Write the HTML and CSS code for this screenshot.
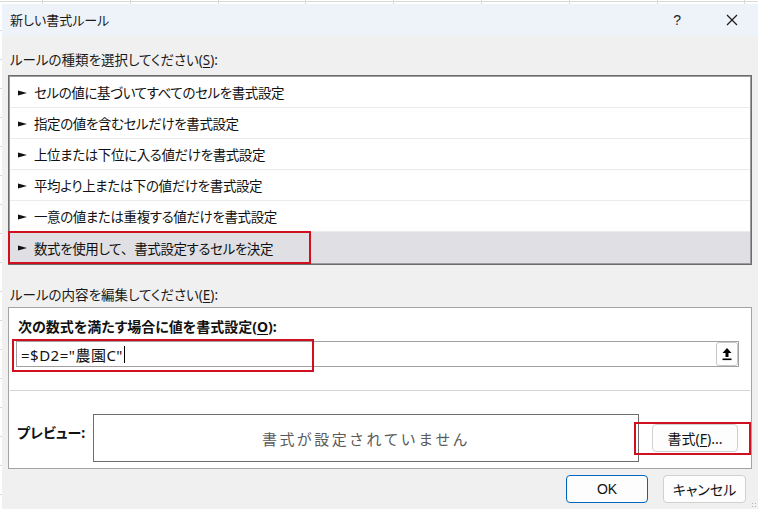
FILE: index.html
```html
<!DOCTYPE html>
<html lang="ja">
<head>
<meta charset="utf-8">
<title>新しい書式ルール</title>
<link rel="stylesheet" href="styles.css">
</head>
<body>
<div class="screen">
  <div class="dialog">
    <div class="titlebar">
      <span class="title">新しい書式ルール</span>
      <span class="tb-btns">
        <span class="help">?</span>
        <svg class="close" width="12" height="12" viewBox="0 0 12 12"><path d="M1 1 L11 11 M11 1 L1 11" stroke="#1a1a1a" stroke-width="1.2" fill="none"/></svg>
      </span>
    </div>
    <div class="body">
      <div class="label">ルールの種類を選択してください(<u>S</u>):</div>
      <div class="list">
        <div class="row"><svg class="arrow" width="9" height="6" viewBox="0 0 9 6"><polygon points="0,0.5 9,3 0,5.5"/></svg><span>セルの値に基づいてすべてのセルを書式設定</span></div>
        <div class="row"><svg class="arrow" width="9" height="6" viewBox="0 0 9 6"><polygon points="0,0.5 9,3 0,5.5"/></svg><span>指定の値を含むセルだけを書式設定</span></div>
        <div class="row"><svg class="arrow" width="9" height="6" viewBox="0 0 9 6"><polygon points="0,0.5 9,3 0,5.5"/></svg><span>上位または下位に入る値だけを書式設定</span></div>
        <div class="row"><svg class="arrow" width="9" height="6" viewBox="0 0 9 6"><polygon points="0,0.5 9,3 0,5.5"/></svg><span>平均より上または下の値だけを書式設定</span></div>
        <div class="row"><svg class="arrow" width="9" height="6" viewBox="0 0 9 6"><polygon points="0,0.5 9,3 0,5.5"/></svg><span>一意の値または重複する値だけを書式設定</span></div>
        <div class="row selected"><svg class="arrow" width="9" height="6" viewBox="0 0 9 6"><polygon points="0,0.5 9,3 0,5.5"/></svg><span>数式を使用して<span class="fw">、</span>書式設定するセルを決定</span><div class="mark mark-row"></div></div>
      </div>
      <div class="label label2">ルールの内容を編集してください(<u>E</u>):</div>
      <div class="panel">
        <div class="panel-top">
          <div class="bold-label top-label">次の数式を満たす場合に値を書式設定(<u>O</u>):</div>
          <div class="input">
            <span class="formula">=$D2="農園C"</span><span class="caret"></span>
            <span class="collapse">
              <svg width="10" height="14" viewBox="0 0 10 14"><polygon points="5,1 9.5,6 6.5,6 6.5,10 3.5,10 3.5,6 0.5,6" fill="#000"/><rect x="0.5" y="11.5" width="9" height="1.6" fill="#000"/></svg>
            </span>
            <div class="mark mark-input"></div>
          </div>
        </div>
        <div class="panel-bottom">
          <div class="bold-label preview-label">プレビュー:</div>
          <div class="preview">書式が設定されていません</div>
          <div class="fmt-wrap">
            <span class="btn fmt">書式(<u>F</u>)...</span>
            <div class="mark mark-fmt"></div>
          </div>
        </div>
      </div>
      <div class="footer">
        <span class="btn ok">OK</span>
        <span class="btn cancel">キャンセル</span>
      </div>
      <div class="grip"></div>
    </div>
  </div>
</div>
</body>
</html>
```
FILE: styles.css
```css
* { box-sizing: border-box; }
html, body { margin: 0; padding: 0; }
body {
  width: 758px;
  height: 509px;
  overflow: hidden;
  font-family: "Noto Sans", "Noto Sans CJK JP", sans-serif;
  font-feature-settings: "palt";
  color: #111;
  background-color: #fff;
  background-image:
    repeating-linear-gradient(to right, transparent 0, transparent 42px, #dadada 42px, #dadada 43px, transparent 43px, transparent 87.8px),
    repeating-linear-gradient(to bottom, #dadada 0, #dadada 1px, transparent 1px, transparent 29px);
  background-position: 0 1px, 0 1px;
}
.screen { width: 758px; height: 509px; padding: 4px 0 0 2px; }
.dialog {
  width: 756px;
  height: 505px;
  display: flex;
  flex-direction: column;
  background: #f0f0f0;
}
.titlebar {
  height: 32px;
  flex: none;
  background: #eef2f9;
  display: flex;
  align-items: center;
  justify-content: space-between;
  padding: 0 20px 0 8px;
}
.title { font-size: 13px; line-height: 18px; color: #1a1a1a; margin-top: -1px; }
.tb-btns { display: flex; align-items: center; gap: 45px; }
.help { font-family: "Liberation Sans", sans-serif; font-size: 14px; color: #222; }
.close { display: block; }
.body {
  flex: 1;
  position: relative;
  padding: 0 4px 0 6px;
  display: flex;
  flex-direction: column;
}
.label {
  font-size: 13.5px;
  line-height: 20px;
  padding-left: 2px;
  margin-top: 14px;
  margin-bottom: 5px;
  color: #1a1a1a;
}
.label u, .bold-label u, .btn u { text-underline-offset: 2px; }
.label2 { margin-top: 20px; margin-bottom: 2px; }
.list {
  height: 190px;
  border: 1px solid #6c6c6c;
  box-shadow: inset 0 0 0 1px #9c9c9c;
  background: #fff;
  padding: 1px;
  width: 744px;
}
.row {
  height: 31px;
  border-bottom: 1px solid #ebebeb;
  display: flex;
  align-items: center;
  padding-left: 8px;
  font-size: 13.5px;
  letter-spacing: -0.4px;
  color: #111;
  position: relative;
}
.fw { font-feature-settings: normal; }
.row:last-child { border-bottom: none; }
.row.selected { background: #dfdfe4; }
.arrow { display: block; margin-right: 7px; fill: #111; margin-top: 1px; }
.mark {
  position: absolute;
  border: 2px solid #d0101e;
  pointer-events: none;
}
.mark-row { left: -2px; top: -1px; width: 303px; height: 33px; }
.panel {
  width: 744px;
  height: 162px;
  border: 1px solid #a3a3a3;
  background: #fff;
  display: flex;
  flex-direction: column;
}
.panel-top {
  height: 83px;
  padding: 9px 0 0 0;
  border-bottom: 1px solid #d4d4d4;
  margin: 0 1px;
}
.bold-label { font-size: 14px; font-weight: bold; line-height: 20px; color: #111; }
.top-label { padding-left: 8px; }
.input {
  position: relative;
  margin: 4px 11px 0 6px;
  height: 26px;
  border: 1px solid #a0a0a0;
  display: flex;
  align-items: center;
  padding-left: 4px;
  font-size: 15px;
}
.formula { letter-spacing: 0.5px; }
.caret { width: 1px; height: 17px; background: #000; margin-left: 1px; }
.collapse {
  position: absolute;
  right: 0;
  top: 0;
  width: 22px;
  height: 24px;
  border: 1px solid #c8c8c8;
  border-radius: 3px;
  background: #fff;
  display: flex;
  align-items: center;
  justify-content: center;
}
.collapse svg { display: block; }
.mark-input { left: -5px; top: -3px; width: 302px; height: 33px; }
.panel-bottom {
  flex: 1;
  display: flex;
  align-items: flex-start;
  padding: 23px 0 0 8px;
}
.preview-label { width: 76px; margin-top: 9px; }
.preview {
  width: 546px;
  height: 48px;
  border: 1px solid #6e6e6e;
  display: flex;
  align-items: center;
  justify-content: center;
  font-size: 15px;
  letter-spacing: 2.4px;
  color: #5a5a5a;
  font-feature-settings: normal;
}
.fmt-wrap { position: relative; margin-left: 13px; margin-top: 10px; }
.btn {
  display: flex;
  align-items: center;
  justify-content: center;
  height: 28px;
  border: 1px solid #d0d0d0;
  border-radius: 4px;
  background: #fdfdfd;
  font-size: 14px;
  color: #111;
}
.fmt { width: 86px; }
.mark-fmt { left: -18px; top: -2px; width: 117px; height: 33px; }
.footer {
  display: flex;
  justify-content: flex-end;
  gap: 15px;
  margin-top: 6px;
  padding-right: 8px;
}
.ok { width: 82px; border-color: #0067c0; font-family: "Liberation Sans", sans-serif; font-size: 14px; }
.cancel { width: 83px; }
.grip {
  position: absolute;
  right: 1px;
  bottom: 1px;
  width: 6px;
  height: 6px;
  background-image: radial-gradient(circle, #b0b0b0 0.8px, transparent 1px);
  background-size: 3px 3px;
}
```
